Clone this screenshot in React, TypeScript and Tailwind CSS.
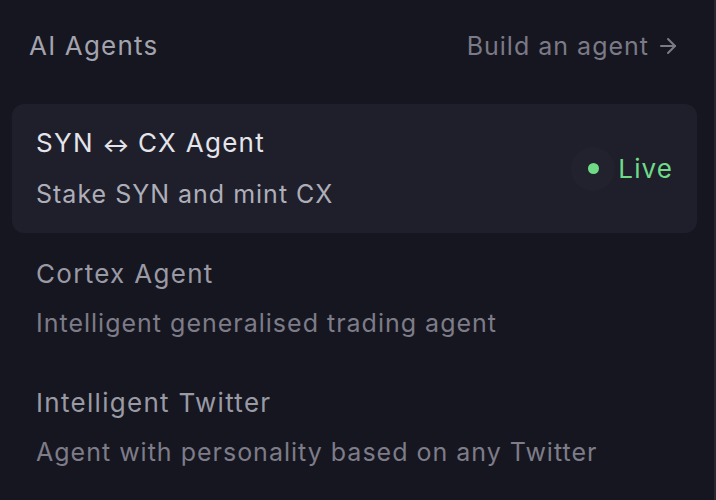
import { ArrowRight } from 'lucide-react';

const AGENTS = [
  { name: 'Cortex Agent', description: 'Intelligent generalised trading agent' },
  { name: 'Intelligent Twitter', description: 'Agent with personality based on any Twitter' },
];

export default function App() {
  return (
    <div
      className="w-[716px] h-[500px] bg-[#161620] border-r-2 border-[#272732] overflow-hidden"
      style={{ fontFamily: 'Inter, "Noto Sans", sans-serif' }}
    >
      {/* Header */}
      <div className="flex items-center justify-between pl-[29px] pr-[34px] pt-[30px] mb-[42px]">
        <h1 className="text-[26px] leading-[32px] text-[#a3a3ae] tracking-[1.2px]">AI Agents</h1>
        <button className="flex items-center gap-[7px] text-[25px] leading-[32px] text-[#7b7a86] tracking-[1px]">
          Build an agent
          <ArrowRight className="w-[24px] h-[24px]" strokeWidth={2} />
        </button>
      </div>

      <div className="pl-[12px] pr-[17px]">
        {/* Active agent */}
        <div className="flex items-center justify-between h-[129px] rounded-[12px] bg-[#1e1f2b] pl-[24px] pr-[24px]">
          <div className="flex flex-col gap-[17px]">
            <div className="text-[26px] leading-[32px] text-[#e4e4ea] tracking-[1.3px]">
              SYN <span className="text-[20px] font-semibold tracking-normal">↔</span> CX Agent
            </div>
            <div className="text-[25px] leading-[32px] text-[#aeaeb9] tracking-[1px]">Stake SYN and mint CX</div>
          </div>
          <div className="flex items-center">
            <div className="w-[44px] h-[44px] rounded-full bg-[#21222e] flex items-center justify-center">
              <span className="w-[11px] h-[11px] rounded-full bg-[#6fdb87]" />
            </div>
            <span className="text-[26px] leading-[32px] text-[#6fdb87] tracking-[1.1px] ml-[3px]">Live</span>
          </div>
        </div>

        {/* Other agents */}
        {AGENTS.map((agent) => (
          <div key={agent.name} className="flex flex-col gap-[17px] pl-[24px] pt-[25px] pb-[23px]">
            <div className="text-[26px] leading-[32px] text-[#9a9aa5] tracking-[1.3px]">{agent.name}</div>
            <div className="text-[25px] leading-[32px] text-[#7d7c88] tracking-[1px]">{agent.description}</div>
          </div>
        ))}
      </div>
    </div>
  );
}
